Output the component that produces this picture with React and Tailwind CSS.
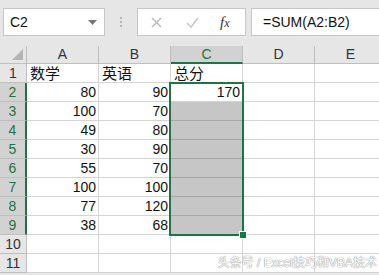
import React from "react";

const cols = ["A", "B", "C", "D", "E"];
const rows = [
  ["数学", "英语", "总分"],
  [80, 90, 170],
  [100, 70, ""],
  [49, 80, ""],
  [30, 90, ""],
  [55, 70, ""],
  [100, 100, ""],
  [77, 120, ""],
  [38, 68, ""],
  ["", "", ""],
  ["", "", ""],
];

const cjk = { fontFamily: '"Noto Sans CJK SC", "Liberation Sans", sans-serif' };

export default function App() {
  return (
    <div
      className="relative w-[379px] h-[275px] overflow-hidden bg-[#e6e6e6] text-[#111]"
      style={{ fontFamily: '"Liberation Sans", "Noto Sans CJK SC", sans-serif' }}
    >
      {/* formula bar */}
      <div className="h-[46px] flex items-start pt-[8px] pl-[3px]">
        <div className="w-[102px] h-[28px] bg-white border border-[#c6c6c6] flex items-center justify-between pl-[6px] pr-[7px] text-[14px]">
          <span>C2</span>
          <svg width="9" height="5" viewBox="0 0 9 5"><path d="M0 0h9L4.5 5z" fill="#777" /></svg>
        </div>
        <div className="w-[32px] h-[28px] flex flex-col items-center justify-center gap-[2px]">
          <span className="w-[2px] h-[2px] bg-[#b5b5b5]" />
          <span className="w-[2px] h-[2px] bg-[#b5b5b5]" />
          <span className="w-[2px] h-[2px] bg-[#b5b5b5]" />
        </div>
        <div className="w-[109px] h-[28px] bg-white border border-[#c6c6c6] flex items-center pl-[12px]">
          <svg width="11" height="11" viewBox="0 0 11 11" className="ml-[1px]">
            <path d="M1 1l9 9M10 1l-9 9" stroke="#b8b8b8" strokeWidth="1.4" />
          </svg>
          <svg width="13" height="11" viewBox="0 0 13 11" className="ml-[24px]">
            <path d="M1 6l4 4 7-9" stroke="#c8c8c8" strokeWidth="1.6" fill="none" />
          </svg>
          <span
            className="ml-[21px] text-[15px] italic text-[#333]"
            style={{ fontFamily: '"Liberation Serif", serif' }}
          >
            f<span className="text-[12px]">x</span>
          </span>
        </div>
        <div className="ml-[5px] flex-1 h-[28px] bg-white border border-[#c6c6c6] border-r-0 flex items-center pl-[11px] text-[14px]">
          =SUM(A2:B2)
        </div>
      </div>

      {/* sheet grid */}
      <div className="grid grid-cols-[27px_72px_72px_72px_72px_72px] grid-rows-[18px_repeat(11,19px)] bg-white">
        <div className="bg-[#e6e6e6] border-r border-b border-[#bfbfbf] flex items-end justify-end p-[3px]">
          <svg width="11" height="11" viewBox="0 0 11 11"><path d="M11 0v11H0z" fill="#b4b4b4" /></svg>
        </div>
        {cols.map((c) => (
          <div
            key={c}
            className={
              c === "C"
                ? "bg-[#d2d2d2] border-r border-[#bfbfbf] border-b-2 border-b-[#217346] text-[#217346] flex items-center justify-center text-[14px]"
                : "bg-[#e6e6e6] border-r border-b border-[#bfbfbf] text-[#333] flex items-center justify-center text-[14px]"
            }
          >
            {c}
          </div>
        ))}
        {rows.map((r, i) => {
          const sel = i >= 1 && i <= 8;
          return (
            <React.Fragment key={i}>
              <div
                className={
                  sel
                    ? "bg-[#d2d2d2] border-b border-[#bfbfbf] border-r-2 border-r-[#217346] text-[#217346] flex items-center justify-center text-[14px]"
                    : "bg-[#e6e6e6] border-r border-b border-[#bfbfbf] text-[#333] flex items-center justify-center text-[14px]"
                }
              >
                {i + 1}
              </div>
              {[0, 1, 2, 3, 4].map((j) => {
                const v = j < 3 ? r[j] : "";
                const isText = typeof v === "string" && v !== "";
                const fill = j === 2 && i >= 2 && i <= 8;
                return (
                  <div
                    key={j}
                    className={`border-r border-b flex items-center text-[14px] ${
                      fill ? "bg-[#c6c6c6] border-[#a8a8a8]" : "border-[#d4d4d4]"
                    } ${isText ? "justify-start pl-[3px] text-[15px]" : "justify-end pr-[2px]"}`}
                    style={isText ? cjk : undefined}
                  >
                    {v}
                  </div>
                );
              })}
            </React.Fragment>
          );
        })}
      </div>

      {/* selection outline */}
      <div className="absolute left-[169px] top-[82px] w-[75px] h-[154px] border-2 border-[#217346]" />
      <div className="absolute left-[239px] top-[231px] w-[8px] h-[8px] bg-[#217346] border border-white" />

      {/* watermark */}
      <div
        className="absolute right-[2px] bottom-[3px] text-[12px] text-white"
        style={{
          fontFamily: '"Liberation Sans", "Noto Sans CJK SC", sans-serif',
          textShadow: "0 0 1px #888, 0 0 1px #888",
        }}
      >
        头条号 / Excel技巧和VBA技术
      </div>
    </div>
  );
}
